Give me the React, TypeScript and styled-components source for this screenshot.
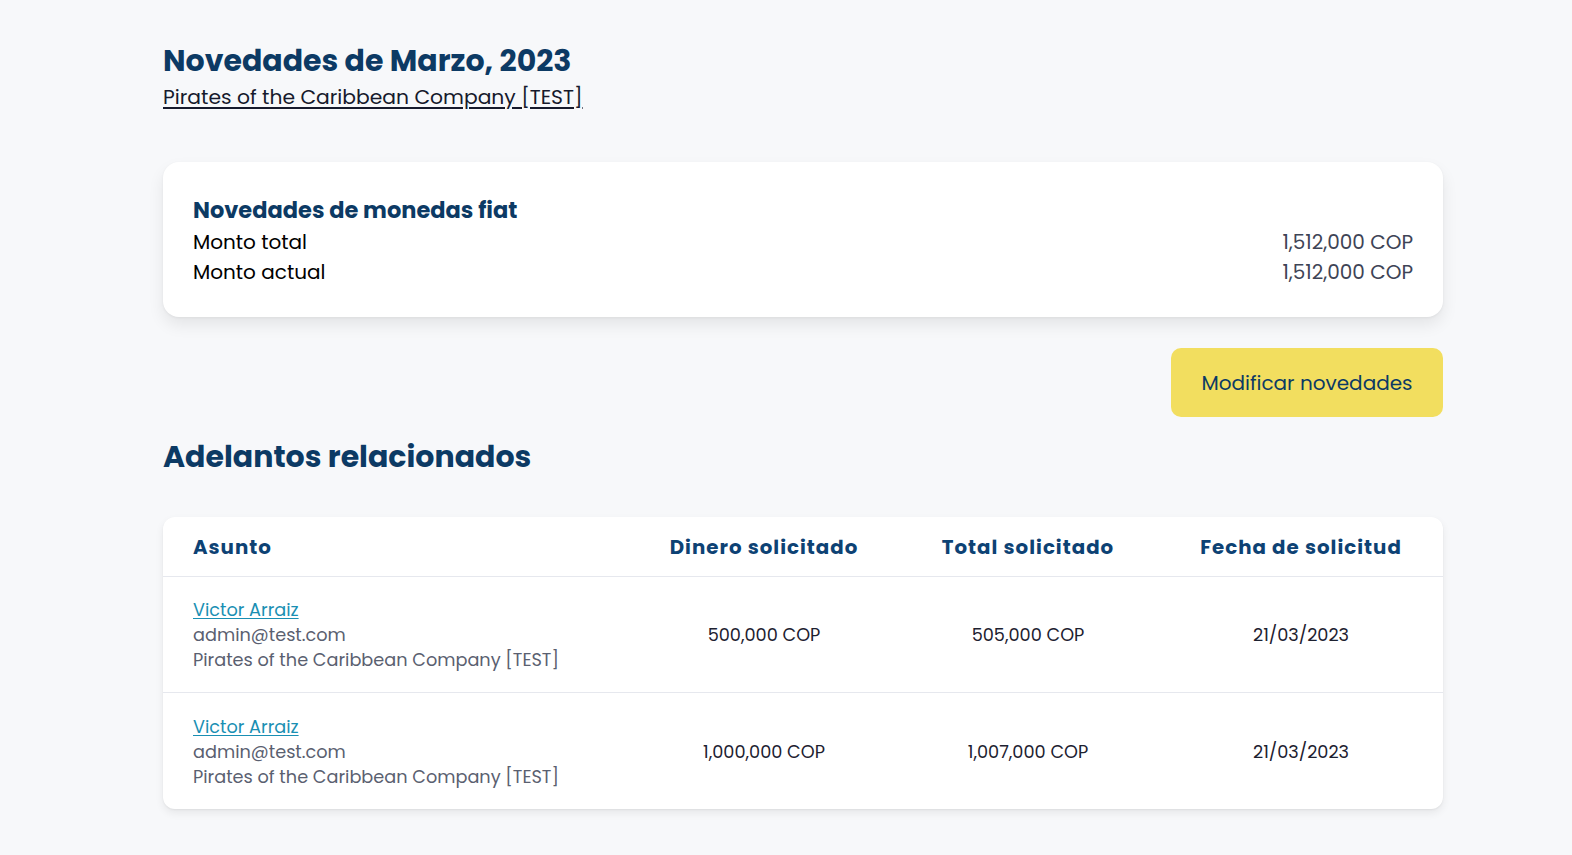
import React from "react";
import styled, { createGlobalStyle } from "styled-components";

const Global = createGlobalStyle`
  html, body { margin: 0; padding: 0; background: #f7f8fa; }
  body { font-family: "Poppins", "Inter", "Noto Sans", sans-serif; color: #111827; }
  * { box-sizing: border-box; }
`;

const Page = styled.div`
  width: 1280px;
  margin-left: 163px;
  padding-top: 43px;
  padding-bottom: 46px;
`;

const Title = styled.h1`
  margin: 0;
  font-size: 30px;
  line-height: 36px;
  font-weight: 700;
  color: #0c3a64;
`;

const SubLink = styled.a`
  display: block;
  width: fit-content;
  margin-top: 3px;
  font-size: 20.3px;
  line-height: 30px;
  color: #161a2c;
  text-decoration: underline;
  text-underline-offset: 3px;
`;

const Card = styled.section`
  margin-top: 50px;
  background: #fff;
  border-radius: 16px;
  box-shadow: 0 8px 16px rgba(0, 0, 0, 0.08), 0 1px 3px rgba(0, 0, 0, 0.05);
  padding: 33px 30px 30px;
`;

const CardTitle = styled.h2`
  margin: 0 0 2px;
  font-size: 22.5px;
  line-height: 30px;
  font-weight: 700;
  color: #0c3a64;
`;

const SummaryRow = styled.div`
  display: flex;
  justify-content: space-between;
  font-size: 20px;
  line-height: 30px;
`;

const Label = styled.span`
  color: #000;
`;

const Value = styled.span`
  color: #3e4456;
`;

const Actions = styled.div`
  display: flex;
  justify-content: flex-end;
  margin-top: 31px;
`;

const YellowButton = styled.button`
  width: 272px;
  height: 69px;
  border: none;
  border-radius: 10px;
  background: #f2de5f;
  color: #0c3a64;
  font-family: inherit;
  font-size: 20px;
  cursor: pointer;
`;

const SectionTitle = styled.h2`
  margin: 22px 0 0;
  font-size: 30px;
  line-height: 36px;
  font-weight: 700;
  color: #0c3a64;
`;

const TableCard = styled.div`
  margin-top: 42px;
  background: #fff;
  border-radius: 12px;
  box-shadow: 0 4px 8px rgba(0, 0, 0, 0.07), 0 1px 2px rgba(0, 0, 0, 0.05);
  overflow: hidden;
`;

const Row = styled.div<{ $head?: boolean }>`
  display: grid;
  grid-template-columns: 468px 266px 262px 1fr;
  align-items: center;
  height: ${(p) => (p.$head ? "60px" : "116px")};
  border-bottom: 1px solid #e6e8ee;
  &:last-child { border-bottom: none; }
`;

const HeadCell = styled.div<{ $left?: boolean }>`
  text-align: ${(p) => (p.$left ? "left" : "center")};
  padding-left: ${(p) => (p.$left ? "30px" : "0")};
  font-size: 19.8px;
  font-weight: 700;
  letter-spacing: 1px;
  color: #0d4274;
`;

const Cell = styled.div`
  text-align: center;
  font-size: 17.7px;
  color: #1d2130;
`;

const Subject = styled.div`
  padding-left: 30px;
  display: flex;
  flex-direction: column;
  font-size: 17.7px;
  line-height: 25px;
  color: #5a6070;
`;

const NameLink = styled.a`
  color: #1a8fb3;
  text-decoration: underline;
  text-underline-offset: 2px;
  width: fit-content;
`;

const rows = [
  { dinero: "500,000 COP", total: "505,000 COP", fecha: "21/03/2023" },
  { dinero: "1,000,000 COP", total: "1,007,000 COP", fecha: "21/03/2023" },
];

export default function App() {
  return (
    <>
      <Global />
      <Page>
        <Title>Novedades de Marzo, 2023</Title>
        <SubLink href="#">Pirates of the Caribbean Company [TEST]</SubLink>
        <Card>
          <CardTitle>Novedades de monedas fiat</CardTitle>
          <SummaryRow>
            <Label>Monto total</Label>
            <Value>1,512,000 COP</Value>
          </SummaryRow>
          <SummaryRow>
            <Label>Monto actual</Label>
            <Value>1,512,000 COP</Value>
          </SummaryRow>
        </Card>
        <Actions>
          <YellowButton>Modificar novedades</YellowButton>
        </Actions>
        <SectionTitle>Adelantos relacionados</SectionTitle>
        <TableCard>
          <Row $head>
            <HeadCell $left>Asunto</HeadCell>
            <HeadCell>Dinero solicitado</HeadCell>
            <HeadCell>Total solicitado</HeadCell>
            <HeadCell>Fecha de solicitud</HeadCell>
          </Row>
          {rows.map((r, i) => (
            <Row key={i}>
              <Subject>
                <NameLink href="#">Victor Arraiz</NameLink>
                <span>admin@test.com</span>
                <span>Pirates of the Caribbean Company [TEST]</span>
              </Subject>
              <Cell>{r.dinero}</Cell>
              <Cell>{r.total}</Cell>
              <Cell>{r.fecha}</Cell>
            </Row>
          ))}
        </TableCard>
      </Page>
    </>
  );
}
